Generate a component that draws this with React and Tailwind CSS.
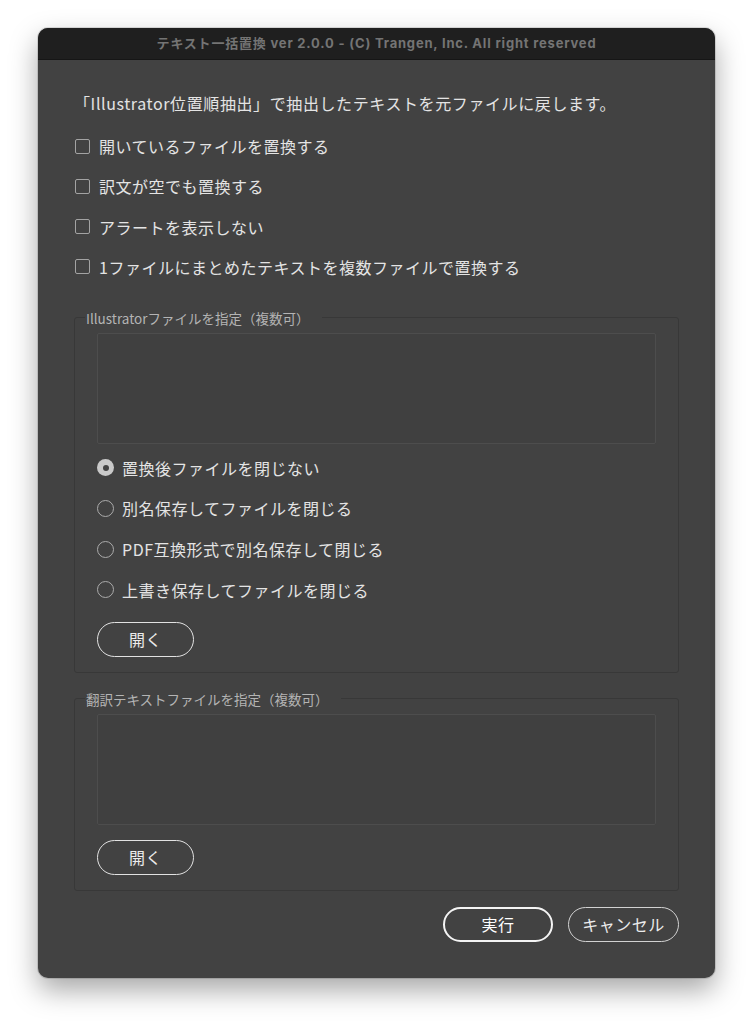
import React from "react";

const FONT = { fontFamily: '"Noto Sans CJK JP", "Noto Sans", sans-serif' };
const TITLE_FONT = { fontFamily: 'Inter, "Noto Sans CJK JP", sans-serif' };

function Checkbox({ label }) {
  return (
    <div className="flex items-center h-[24px]">
      <div className="w-[15px] h-[15px] border-[1.5px] border-[#a3a3a3] rounded-[2px] ml-[1px] shrink-0" />
      <span className="ml-[9px] text-[16px] tracking-[0.5px] text-[#e4e4e4] leading-[24px]">{label}</span>
    </div>
  );
}

function Radio({ label, checked }) {
  return (
    <div className="flex items-center h-[24px]">
      {checked ? (
        <div className="w-[17px] h-[17px] rounded-full bg-[#c9c9c9] flex items-center justify-center shrink-0">
          <div className="w-[6px] h-[6px] rounded-full bg-[#424242]" />
        </div>
      ) : (
        <div className="w-[17px] h-[17px] rounded-full border-[1.5px] border-[#ababab] shrink-0" />
      )}
      <span className="ml-[8px] text-[16px] tracking-[0.5px] text-[#e4e4e4] leading-[24px]">{label}</span>
    </div>
  );
}

function PillButton({ label, className }) {
  return (
    <div
      className={
        "h-[35px] rounded-full flex items-center justify-center text-[16px] tracking-[0.5px] text-[#ececec] " +
        className
      }
    >
      {label}
    </div>
  );
}

function ListBox() {
  return <div className="h-[111px] border border-[#4d4d4d] rounded-[2px] bg-[#404040]" />;
}

export default function App() {
  return (
    <div className="min-h-[1024px] bg-white pt-[28px] pl-[38px]" style={FONT}>
      <div className="w-[677px] rounded-[10px] overflow-hidden bg-[#424242] shadow-[0_12px_28px_rgba(0,0,0,0.35),0_0_0_1px_rgba(0,0,0,0.12)] flex flex-col">
        {/* title bar */}
        <div className="h-[32px] bg-[#1f1f1f] border-b border-[#161616] flex items-center justify-center">
          <span className="text-[13px] font-bold tracking-[0.8px] text-[#747474] leading-none" style={TITLE_FONT}>
            テキスト一括置換 ver 2.0.0 - (C) Trangen, Inc. All right reserved
          </span>
        </div>

        <div className="flex flex-col px-[36px] pt-[31px] pb-[36px]">
          <div className="text-[16px] tracking-[0.6px] text-[#e4e4e4] leading-[24px]">
            「Illustrator位置順抽出」で抽出したテキストを元ファイルに戻します。
          </div>

          <div className="flex flex-col gap-[16.3px] mt-[19px]">
            <Checkbox label="開いているファイルを置換する" />
            <Checkbox label="訳文が空でも置換する" />
            <Checkbox label="アラートを表示しない" />
            <Checkbox label="1ファイルにまとめたテキストを複数ファイルで置換する" />
          </div>

          <fieldset className="mt-[30px] border border-[#383838] rounded-[3px] px-[10px] pb-[15px]">
            <legend className="px-[1px] pr-[12px] text-[13.5px] leading-[18px] text-[#b4b4b4]">
              Illustratorファイルを指定（複数可）
            </legend>
            <div className="mx-[12px] flex flex-col">
              <div className="mt-[6px]">
                <ListBox />
              </div>
              <div className="flex flex-col gap-[16.6px] mt-[12px]">
                <Radio label="置換後ファイルを閉じない" checked />
                <Radio label="別名保存してファイルを閉じる" />
                <Radio label="PDF互換形式で別名保存して閉じる" />
                <Radio label="上書き保存してファイルを閉じる" />
              </div>
              <PillButton label="開く" className="mt-[20px] w-[97px] border-[1.5px] border-[#e2e2e2]" />
            </div>
          </fieldset>

          <fieldset className="mt-[17px] border border-[#383838] rounded-[3px] px-[10px] pb-[15px]">
            <legend className="px-[1px] pr-[12px] text-[13.5px] leading-[18px] text-[#b4b4b4]">
              翻訳テキストファイルを指定（複数可）
            </legend>
            <div className="mx-[12px] flex flex-col">
              <div className="mt-[6px]">
                <ListBox />
              </div>
              <PillButton label="開く" className="mt-[15px] w-[97px] border-[1.5px] border-[#e2e2e2]" />
            </div>
          </fieldset>

          <div className="flex justify-end gap-[15px] mt-[16px]">
            <PillButton label="実行" className="w-[110px] border-2 border-[#f4f4f4] text-white" />
            <PillButton label="キャンセル" className="w-[111px] border border-[#d2d2d2]" />
          </div>
        </div>
      </div>
    </div>
  );
}
